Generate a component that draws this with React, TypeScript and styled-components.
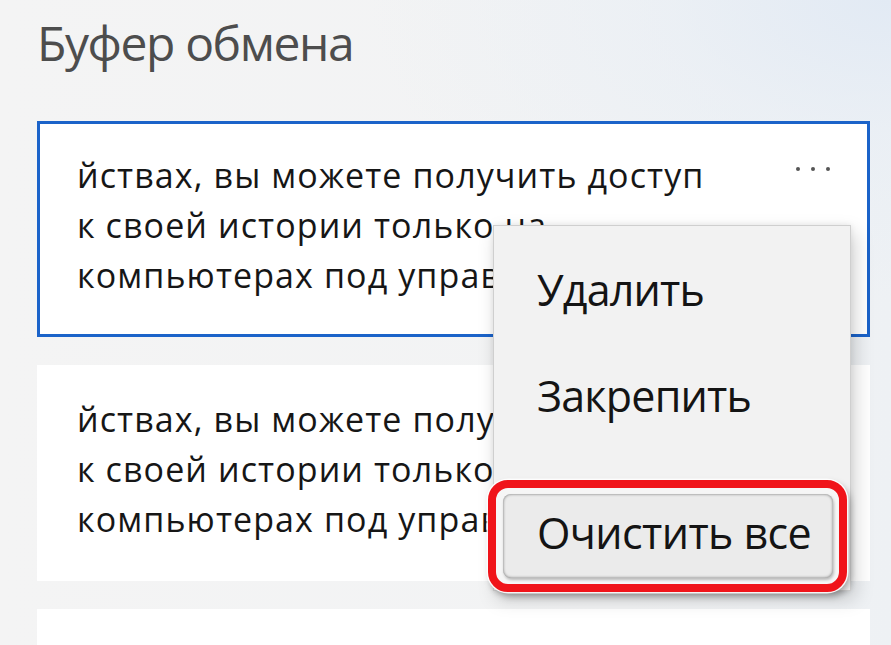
import React from "react";
import styled, { createGlobalStyle } from "styled-components";

const GlobalStyle = createGlobalStyle`
  html, body {
    margin: 0;
    padding: 0;
    height: 645px;
    overflow: hidden;
  }
  body {
    font-family: "Open Sans", "Noto Sans", "DejaVu Sans", sans-serif;
    background: #f3f3f3;
  }
`;

const Page = styled.div`
  position: relative;
  width: 891px;
  height: 645px;
  box-sizing: border-box;
  padding: 19px 21px 0 37px;
  overflow: hidden;
  background:
    radial-gradient(ellipse 520px 300px at 100% 0%, #e2eaf4 0%, rgba(232, 238, 245, 0.6) 45%, rgba(243, 243, 243, 0) 100%),
    linear-gradient(90deg, #f4f4f4 0%, #f2f3f4 70%, #eef1f4 100%);
`;

const Title = styled.h1`
  margin: 0;
  font-size: 48px;
  line-height: 48px;
  font-weight: 400;
  color: #4d4d4d;
  letter-spacing: -1.4px;
`;

const List = styled.div`
  display: flex;
  flex-direction: column;
  gap: 28px;
  margin-top: 54px;
`;

const Card = styled.div<{ $selected?: boolean }>`
  display: flex;
  align-items: flex-start;
  height: 216px;
  flex-shrink: 0;
  box-sizing: border-box;
  padding: 26px 37px 0 37px;
  background: #ffffff;
  border: 3px solid ${(p) => (p.$selected ? "#1b63c9" : "transparent")};
`;

const ClipText = styled.div`
  flex: 1;
  min-width: 0;
  overflow: hidden;
  font-size: 34px;
  line-height: 50px;
  color: #161616;
  letter-spacing: 1.1px;
`;

const Line = styled.div`
  white-space: nowrap;
`;

const MoreButton = styled.div`
  display: flex;
  gap: 11px;
  margin-top: 17px;
  margin-left: 20px;
`;

const Dot = styled.span`
  width: 4px;
  height: 4px;
  border-radius: 50%;
  background: #555555;
`;

const Menu = styled.div`
  position: absolute;
  left: 493px;
  top: 225px;
  width: 358px;
  height: 366px;
  box-sizing: border-box;
  padding: 11px 0 0 0;
  background: #f2f2f2;
  border: 1px solid #cfcfcf;
  box-shadow: 4px 8px 18px rgba(0, 0, 0, 0.18), 0 0 6px rgba(0, 0, 0, 0.08);
  display: flex;
  flex-direction: column;
`;

const MenuItem = styled.div`
  height: 106px;
  padding-left: 43px;
  font-size: 43px;
  line-height: 106px;
  color: #141414;
  letter-spacing: -0.8px;
  white-space: nowrap;
`;

const Separator = styled.div`
  height: 2px;
  margin: 18px 37px 0 39px;
  background: #8c8c8c;
`;

const Highlight = styled.div`
  margin: 13px 3px 0 -6px;
  padding: 6px 6px 6px 7px;
  border: 8px solid #f0141a;
  border-radius: 20px;
  box-shadow:
    0 0 0 1.5px rgba(255, 255, 255, 0.9),
    3px 4px 7px rgba(0, 0, 0, 0.35);
  background: #f6f6f6;
`;

const ActiveItem = styled.div`
  height: 84px;
  box-sizing: border-box;
  padding: 0 0 6px 34px;
  border-radius: 8px;
  background: #ebebeb;
  box-shadow: inset 0 0 3px rgba(0, 0, 0, 0.55), 1px 2px 3px rgba(0, 0, 0, 0.25);
  font-size: 43px;
  line-height: 78px;
  color: #141414;
  letter-spacing: -0.6px;
  white-space: nowrap;
`;

const clipLines = [
  "йствах, вы можете получить доступ",
  "к своей истории только на",
  "компьютерах под управлением",
];

export default function App() {
  return (
    <>
      <GlobalStyle />
      <Page>
        <Title>Буфер обмена</Title>
        <List>
          <Card $selected>
            <ClipText>
              {clipLines.map((l) => (
                <Line key={l}>{l}</Line>
              ))}
            </ClipText>
            <MoreButton aria-label="Ещё">
              <Dot />
              <Dot />
              <Dot />
            </MoreButton>
          </Card>
          <Card>
            <ClipText>
              {clipLines.map((l) => (
                <Line key={l}>{l}</Line>
              ))}
            </ClipText>
          </Card>
          <Card />
        </List>
        <Menu>
          <MenuItem>Удалить</MenuItem>
          <MenuItem>Закрепить</MenuItem>
          <Separator />
          <Highlight>
            <ActiveItem>Очистить все</ActiveItem>
          </Highlight>
        </Menu>
      </Page>
    </>
  );
}
